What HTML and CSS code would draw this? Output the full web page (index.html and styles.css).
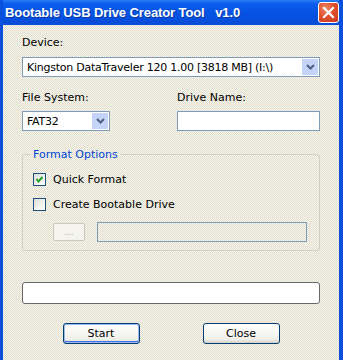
FILE: index.html
```html
<!DOCTYPE html>
<html>
<head>
<meta charset="utf-8">
<link rel="stylesheet" href="styles.css">
</head>
<body>
<div class="window">
  <div class="titlebar">
    <span class="title">Bootable USB Drive Creator Tool&nbsp;&nbsp; v1.0</span>
    <span class="close-x">
      <svg width="21" height="21" viewBox="0 0 21 21"><path d="M6 6 L15 15 M15 6 L6 15" stroke="#fff" stroke-width="2.2" stroke-linecap="square"/></svg>
    </span>
  </div>
  <div class="client">
    <div class="lbl">Device:</div>
    <div class="combo device">
      <span class="combo-text">Kingston DataTraveler 120 1.00 [3818 MB] (I:\)</span>
      <span class="drop"><svg width="9" height="6" viewBox="0 0 9 6"><path d="M1 1 L4.5 4.5 L8 1" fill="none" stroke="#4D6185" stroke-width="2"/></svg></span>
    </div>
    <div class="row2">
      <div class="col">
        <div class="lbl">File System:</div>
        <div class="combo fs">
          <span class="combo-text">FAT32</span>
          <span class="drop"><svg width="9" height="6" viewBox="0 0 9 6"><path d="M1 1 L4.5 4.5 L8 1" fill="none" stroke="#4D6185" stroke-width="2"/></svg></span>
        </div>
      </div>
      <div class="col">
        <div class="lbl">Drive Name:</div>
        <div class="textbox"></div>
      </div>
    </div>
    <fieldset class="group">
      <legend>Format Options</legend>
      <div class="check-row first">
        <span class="checkbox"><svg width="11" height="11" viewBox="0 0 11 11"><path d="M2.5 5 L4.5 7.5 L8.5 3" fill="none" stroke="#21A121" stroke-width="2"/></svg></span>
        <span class="check-label">Quick Format</span>
      </div>
      <div class="check-row">
        <span class="checkbox"></span>
        <span class="check-label">Create Bootable Drive</span>
      </div>
      <div class="browse-row">
        <span class="browse-btn">...</span>
        <span class="textbox path"></span>
      </div>
    </fieldset>
    <div class="progress"></div>
    <div class="buttons">
      <span class="btn default">Start</span>
      <span class="btn">Close</span>
    </div>
  </div>
</div>
</body>
</html>
```
FILE: styles.css
```css
html, body {
  margin: 0;
  padding: 0;
  background: #0A5AE6;
}
.window {
  width: 343px;
  height: 360px;
  box-sizing: border-box;
  border-left: 3px solid #0A50DC;
  border-right: 4px solid #0A50DC;
  background: #0A50DC;
  overflow: hidden;
  font-family: "DejaVu Sans", sans-serif;
  font-size: 11px;
  color: #000;
}
.titlebar {
  height: 25px;
  display: flex;
  align-items: center;
  justify-content: space-between;
  background: linear-gradient(#2C7BF5 0px, #0A5CEA 4px, #0553E2 14px, #0A4CD6 25px);
  margin: 0 -4px 0 -3px;
  padding: 0 5px 0 5px;
}
.title {
  font-family: "Liberation Sans", sans-serif;
  font-weight: bold;
  font-size: 13px;
  letter-spacing: -0.1px;
  color: #fff;
  text-shadow: 1px 1px 0 #0A3AA8;
  white-space: pre;
}
.close-x {
  width: 21px;
  height: 21px;
  box-sizing: border-box;
  border: 1px solid #fff;
  border-radius: 3px;
  background: radial-gradient(circle at 35% 30%, #F08A6A 0, #E0512E 45%, #C7381A 100%);
  display: flex;
  align-items: center;
  justify-content: center;
  margin-right: -1px;
}
.close-x svg { display: block; margin: -1px; }
.client {
  height: 335px;
  box-sizing: border-box;
  padding: 11px 19px 0 19px;
  background: repeating-conic-gradient(#F8F7F2 0 25%, #E0DCCA 0 50%) 0 0 / 2px 2px;
}
.lbl {
  height: 13px;
  line-height: 13px;
  white-space: nowrap;
}
.combo {
  height: 20px;
  box-sizing: border-box;
  border: 1px solid #7F9DB9;
  background: #fff;
  display: flex;
  align-items: center;
  justify-content: space-between;
  padding: 1px;
}
.combo.device { margin-top: 8px; }
.combo-text {
  padding-left: 3px;
  white-space: nowrap;
  overflow: hidden;
  letter-spacing: -0.25px;
}
.drop {
  width: 16px;
  height: 16px;
  flex: none;
  background: #C4D4F8;
  display: flex;
  align-items: center;
  justify-content: center;
}
.row2 {
  margin-top: 14px;
  display: grid;
  grid-template-columns: 88px 143px;
  column-gap: 67px;
}
.row2 .combo, .row2 .textbox { margin-top: 7px; }
.textbox {
  display: block;
  height: 20px;
  box-sizing: border-box;
  border: 1px solid #7F9DB9;
  background: #fff;
}
.group {
  margin: 17px 0 0 0;
  padding: 0 0 8px 10px;
  border: 1px solid #D0D0BF;
  border-radius: 3px;
  min-width: 0;
}
.group legend {
  margin-left: -2px;
  padding: 0 2px;
  color: #0046D5;
  line-height: 13px;
  height: 13px;
}
.check-row {
  display: flex;
  align-items: center;
  height: 13px;
  margin-top: 12px;
}
.checkbox {
  width: 13px;
  height: 13px;
  box-sizing: border-box;
  border: 1px solid #1C5180;
  background: linear-gradient(135deg, #DCDCD7 0%, #F5F4EF 60%, #fff 100%);
  display: flex;
  align-items: center;
  justify-content: center;
  flex: none;
}
.check-label { margin-left: 7px; white-space: nowrap; }
.browse-row {
  display: flex;
  align-items: center;
  margin-top: 11px;
  padding-left: 20px;
}
.browse-btn {
  width: 32px;
  height: 18px;
  box-sizing: border-box;
  border: 1px solid #CAC8BB;
  border-radius: 2px;
  background: #F4F3EE;
  color: #ACA899;
  font-size: 9px;
  display: flex;
  align-items: flex-end;
  justify-content: center;
  padding-bottom: 3px;
}
.textbox.path {
  width: 210px;
  margin-left: 12px;
  border-color: #7F9DB9;
  background: transparent;
}
.progress {
  margin-top: 31px;
  height: 22px;
  box-sizing: border-box;
  border: 1px solid #686868;
  border-radius: 3px;
  background: #fff;
}
.buttons {
  margin-top: 19px;
  display: flex;
  justify-content: center;
  gap: 63px;
}
.btn {
  width: 77px;
  height: 21px;
  box-sizing: border-box;
  border: 1px solid #003C74;
  border-radius: 3px;
  background: linear-gradient(#FFFFFF, #F0F0EA 80%, #D6D0C5);
  display: flex;
  align-items: center;
  justify-content: center;
  font-size: 11px;
}
.btn.default {
  box-shadow: inset 0 0 0 1px #9DB9EB, inset 0 -1px 0 1px #3D76E4;
}
```
